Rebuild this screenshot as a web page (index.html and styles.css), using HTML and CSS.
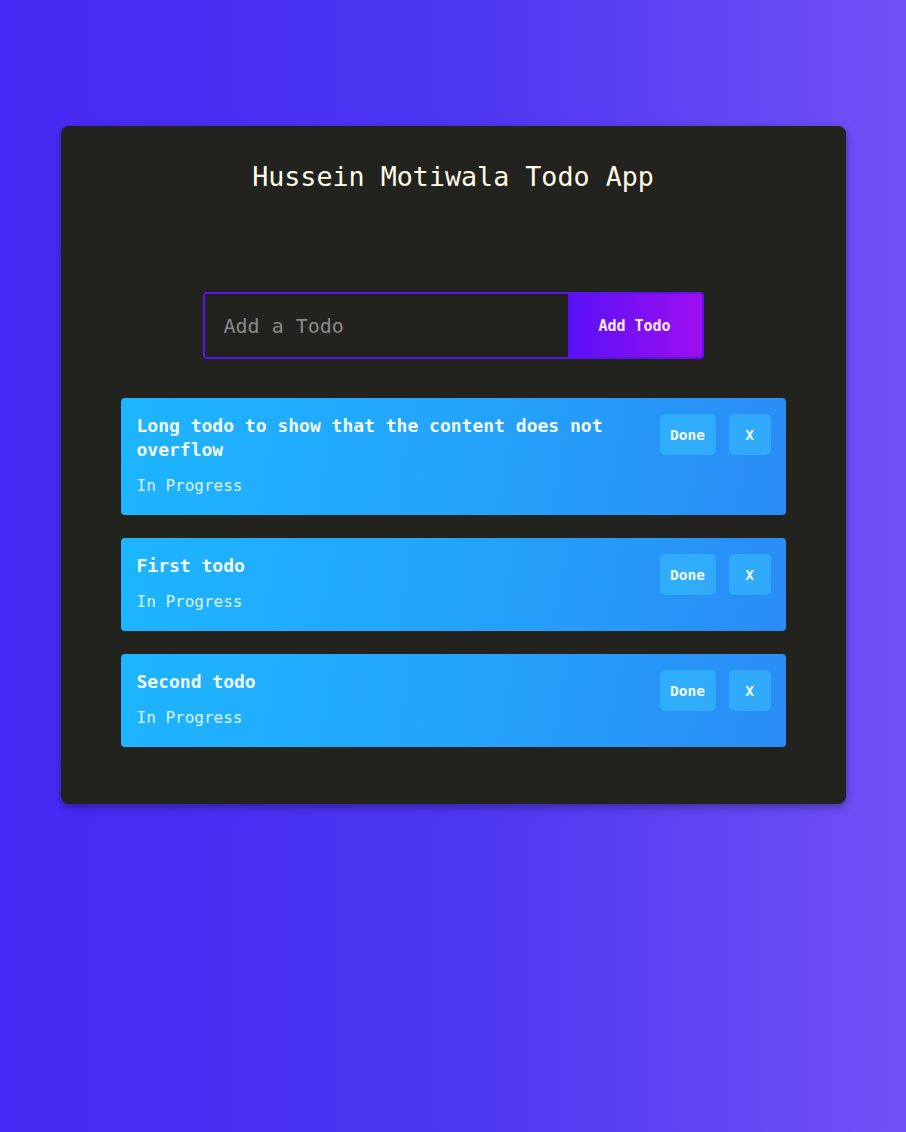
FILE: index.html
```html
<!DOCTYPE html>
<html lang="en">
<head>
<meta charset="utf-8">
<title>Hussein Motiwala Todo App</title>
<link rel="stylesheet" href="styles.css">
</head>
<body>
<main class="app">
  <h1 class="app-title">Hussein Motiwala Todo App</h1>
  <form class="add-form">
    <input class="add-input" type="text" placeholder="Add a Todo">
    <button class="add-btn" type="button">Add Todo</button>
  </form>
  <ul class="todo-list">
    <li class="todo">
      <div class="todo-body">
        <p class="todo-title">Long todo to show that the content does not overflow</p>
        <p class="todo-status">In Progress</p>
      </div>
      <div class="todo-actions">
        <button class="todo-btn" type="button">Done</button>
        <button class="todo-btn todo-btn-x" type="button">X</button>
      </div>
    </li>
    <li class="todo">
      <div class="todo-body">
        <p class="todo-title">First todo</p>
        <p class="todo-status">In Progress</p>
      </div>
      <div class="todo-actions">
        <button class="todo-btn" type="button">Done</button>
        <button class="todo-btn todo-btn-x" type="button">X</button>
      </div>
    </li>
    <li class="todo">
      <div class="todo-body">
        <p class="todo-title">Second todo</p>
        <p class="todo-status">In Progress</p>
      </div>
      <div class="todo-actions">
        <button class="todo-btn" type="button">Done</button>
        <button class="todo-btn todo-btn-x" type="button">X</button>
      </div>
    </li>
  </ul>
</main>
</body>
</html>
```
FILE: styles.css
```css
html, body {
  margin: 0;
  padding: 0;
  min-height: 100%;
}
body {
  min-height: 1132px;
  background: linear-gradient(90deg, #4629f4 0%, #4c36f1 50%, #7150f6 100%);
  font-family: "DejaVu Sans Mono", "Liberation Mono", monospace;
  padding-top: 126px;
  box-sizing: border-box;
}
.app {
  width: 785px;
  margin: 0 auto;
  box-sizing: border-box;
  background: #22221e;
  border-radius: 8px;
  padding: 35px 60px 57px;
  box-shadow: 0 3px 8px rgba(0, 0, 0, 0.35);
  display: flex;
  flex-direction: column;
  align-items: center;
}
.app-title {
  margin: 0;
  font-size: 26.7px;
  line-height: 32px;
  font-weight: normal;
  color: #fffce8;
}
.add-form {
  margin: 99px 0 0;
  width: 501px;
  height: 67px;
  display: flex;
  box-sizing: border-box;
  border: 2px solid #5c14e8;
  border-radius: 4px;
  overflow: hidden;
}
.add-input {
  flex: 1;
  min-width: 0;
  border: none;
  outline: none;
  background: #22221e;
  font-family: inherit;
  font-size: 20px;
  color: #ddd;
  padding: 0 19px;
}
.add-input::placeholder {
  color: #8a8a86;
}
.add-btn {
  width: 134px;
  border: none;
  background: linear-gradient(90deg, #5811f6, #9e0ef0);
  color: #ffeeff;
  font-family: inherit;
  font-size: 15px;
  font-weight: bold;
  padding: 0;
}
.todo-list {
  list-style: none;
  margin: 39px 0 0;
  padding: 0;
  width: 100%;
  display: flex;
  flex-direction: column;
  gap: 23px;
}
.todo {
  display: flex;
  align-items: flex-start;
  gap: 16px;
  padding: 16px 15px 17px 16px;
  border-radius: 4px;
  background: linear-gradient(100deg, #1db5ff 0%, #23a4fb 50%, #2a8cf6 100%);
}
.todo-body {
  flex: 1;
  min-width: 0;
}
.todo-title {
  margin: 0;
  font-size: 18px;
  line-height: 24px;
  font-weight: bold;
  color: #f0fcff;
}
.todo-status {
  margin: 12px 0 0;
  font-size: 16px;
  line-height: 24px;
  color: #dcf6ff;
}
.todo-actions {
  display: flex;
  gap: 13px;
}
.todo-btn {
  height: 41px;
  width: 56px;
  border: none;
  border-radius: 5px;
  background: rgba(60, 210, 255, 0.4);
  color: #f0fcff;
  font-family: inherit;
  font-size: 14.5px;
  font-weight: bold;
  padding: 0;
}
.todo-btn-x {
  width: 42px;
}
```
